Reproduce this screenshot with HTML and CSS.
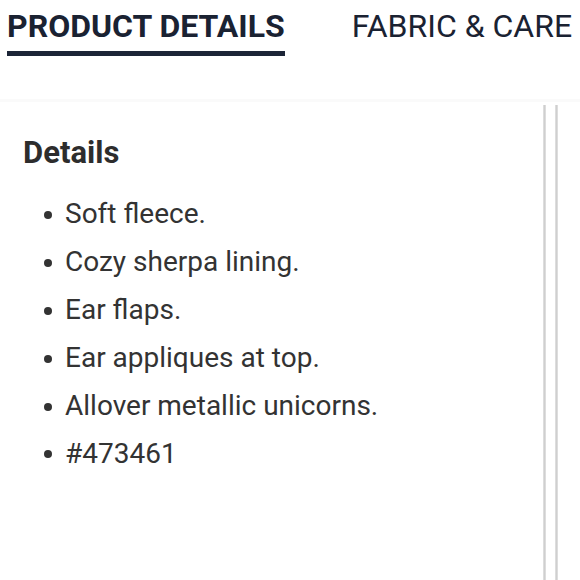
FILE: index.html
```html
<!DOCTYPE html>
<html>
<head>
<meta charset="utf-8">
<link rel="stylesheet" href="styles.css">
</head>
<body>
<div class="tabs">
  <div class="tab active">PRODUCT DETAILS</div>
  <div class="tab">FABRIC &amp; CARE</div>
</div>
<div class="content">
  <div class="panel">
    <h2 class="heading">Details</h2>
    <ul class="list">
      <li>Soft fleece.</li>
      <li>Cozy sherpa lining.</li>
      <li>Ear flaps.</li>
      <li>Ear appliques at top.</li>
      <li>Allover metallic unicorns.</li>
      <li>#473461</li>
    </ul>
  </div>
  <div class="edge"></div>
  <div class="gap"></div>
  <div class="edge"></div>
  <div class="rest"></div>
</div>
</body>
</html>
```
FILE: styles.css
```css
html, body {
  margin: 0;
  padding: 0;
  background: #ffffff;
  width: 580px;
  height: 580px;
  overflow: hidden;
  font-family: Roboto, "Liberation Sans", sans-serif;
}
.tabs {
  display: flex;
  gap: 67px;
  padding-left: 7px;
  height: 99px;
}
.tab {
  font-size: 32px;
  line-height: 1;
  color: #1a2232;
  padding-top: 10px;
  height: 38px;
  white-space: nowrap;
}
.tab.active {
  font-weight: 700;
  height: 41px;
  border-bottom: 5px solid #1c2537;
}
.content {
  display: flex;
  height: 481px;
  border-top: 3px solid #fafafa;
}
.panel {
  width: 543px;
  padding-left: 23px;
  box-sizing: border-box;
}
.heading {
  margin: 34px 0 0 0;
  font-size: 31px;
  font-weight: 700;
  line-height: 34px;
  color: #2d2d2d;
}
.list {
  margin: 20px 0 0 0;
  padding-left: 21px;
  list-style: none;
  font-size: 28px;
  line-height: 47.9px;
  color: #333333;
}
.list li {
  display: flex;
  align-items: center;
}
.list li::before {
  content: "";
  width: 8px;
  height: 8px;
  border-radius: 50%;
  background: #333333;
  margin-right: 13px;
  margin-top: 2px;
  flex: none;
}
.edge {
  width: 3px;
  margin-top: 3px;
  background: linear-gradient(to right, #e4e4e4, #cfcfcf, #e4e4e4);
}
.gap {
  width: 9px;
}
.rest {
  flex: 1;
}
```
